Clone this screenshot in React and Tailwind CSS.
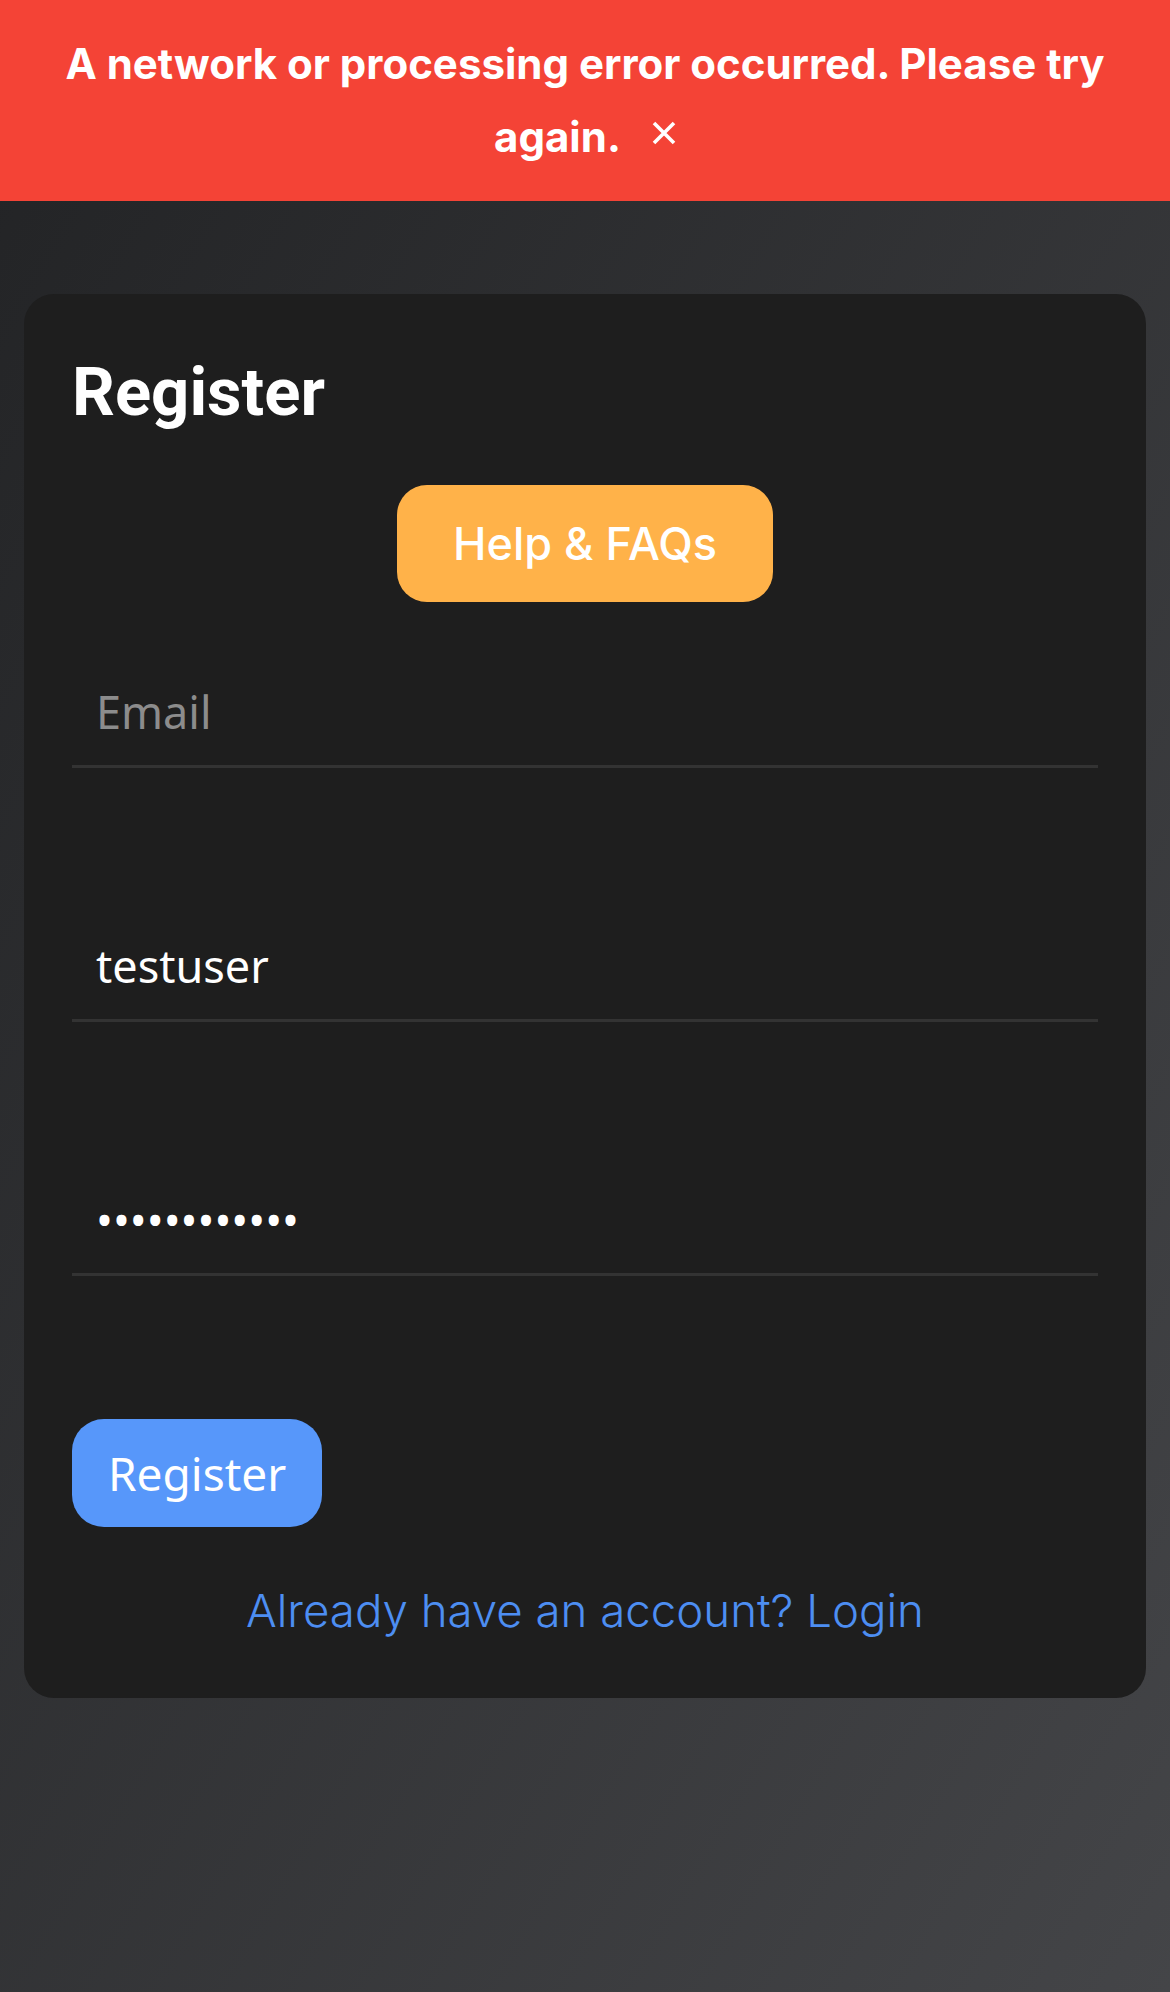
import React from "react";

const inter = { fontFamily: "Inter, 'Liberation Sans', sans-serif" };

const Field = ({ type = "text", placeholder, value }) => (
  <input
    type={type}
    placeholder={placeholder}
    defaultValue={value}
    className="block w-full bg-transparent border-0 border-b-[3px] border-[#333333] px-[24px] pt-[25px] pb-[23px] text-[45px] leading-[61px] text-white placeholder:text-[#8c8c8c] outline-none font-['Noto_Sans',sans-serif]"
  />
);

const App = () => {
  return (
    <div className="min-h-[1992px] w-full flex flex-col bg-gradient-to-br from-[#222325] to-[#444548]">
      <div
        className="bg-[#f44336] text-white text-center font-bold text-[42px] leading-[73px] px-[48px] pt-[27px] pb-[28px]"
        style={inter}
      >
        <span>A network or processing error occurred. Please try again.</span>
        <button className="inline-block align-middle ml-[31px] -mt-[16px] w-[24px] h-[24px] text-white">
          <svg viewBox="0 0 24 24" width="24" height="24" fill="none" stroke="currentColor" strokeWidth="3.6" strokeLinecap="butt">
            <path d="M2 2 L22 22 M22 2 L2 22" />
          </svg>
        </button>
      </div>

      <div className="mx-[24px] mt-[93px] rounded-[30px] bg-[#1e1e1e] px-[48px] pt-[48px] pb-[60px] flex flex-col">
        <h2 className="mt-[12px] text-[67px] leading-[77px] font-bold text-white font-['Roboto',sans-serif]">
          Register
        </h2>

        <button
          className="self-center mt-[54px] h-[117px] px-[56px] rounded-[30px] bg-[#ffb249] text-white text-[45px] font-medium"
          style={inter}
        >
          Help &amp; FAQs
        </button>

        <div className="mt-[54px] flex flex-col gap-[142px]">
          <Field type="email" placeholder="Email" />
          <Field value="testuser" />
          <Field type="password" value="testuser1234" />
          <div className="mt-[1px]">
            <button className="h-[108px] px-[36px] rounded-[32px] bg-[#5797fa] text-white text-[46px] font-['Noto_Sans',sans-serif]">
              Register
            </button>
          </div>
        </div>

        <a
          className="mt-[57px] text-center text-[45.6px] leading-[54px] font-light text-[#4d8ef2]"
          style={inter}
        >
          Already have an account? Login
        </a>
      </div>
    </div>
  );
};

export default App;
